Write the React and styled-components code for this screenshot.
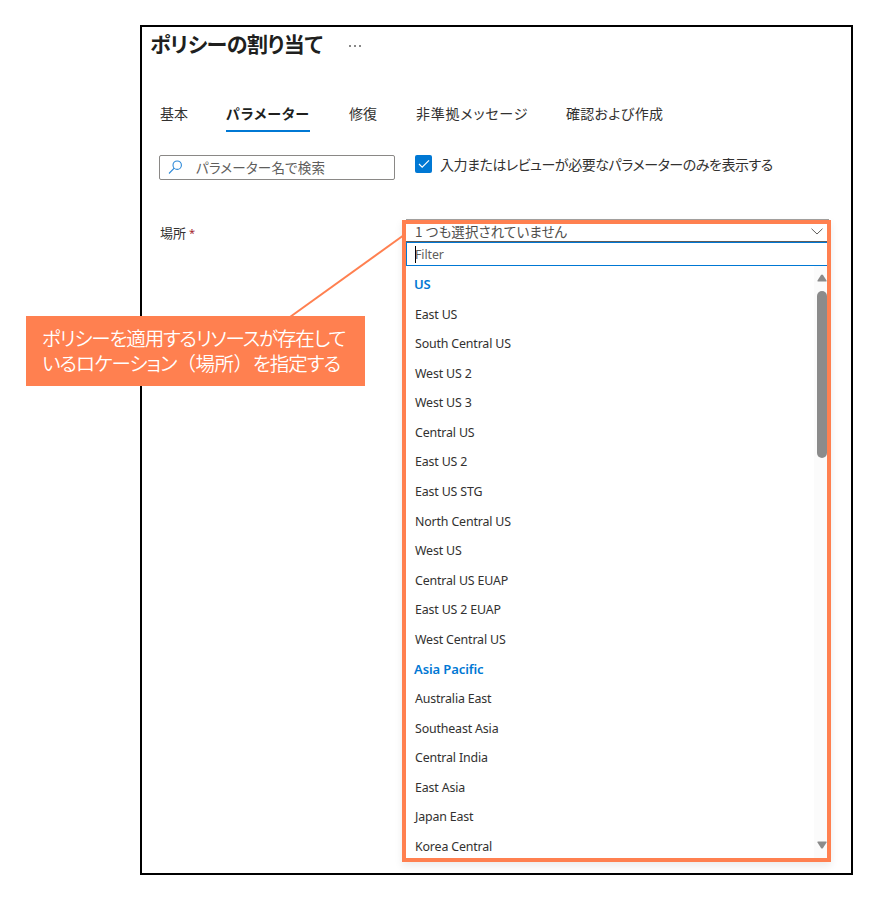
import React from "react";
import styled, { createGlobalStyle } from "styled-components";

const orange = "#ff8050";
const blue = "#0078d4";

const GlobalStyle = createGlobalStyle`
  * { box-sizing: border-box; }
  body {
    margin: 0;
    background: #fff;
    color: #323130;
    font-family: "Noto Sans", "Noto Sans CJK JP", sans-serif;
  }
`;

const Page = styled.div`
  position: relative;
  width: 875px;
  height: 901px;
  padding: 25px 22px 26px 140px;
  overflow: hidden;
`;

const Window = styled.main`
  width: 713px;
  height: 850px;
  border: 2px solid #000;
`;

const Jp = styled.span`
  display: block;
  margin: 0;
  white-space: nowrap;
  font-family: "Noto Sans CJK JP", sans-serif;
  font-feature-settings: "palt";
  font-size: ${(p) => p.$size || 14}px;
  font-weight: ${(p) => p.$weight || 400};
  letter-spacing: ${(p) => p.$spacing || 0}px;
  line-height: 20px;
`;

const Wide = styled.span`
  font-feature-settings: normal;
  letter-spacing: -0.5px;
`;

const Header = styled.header`
  display: flex;
  align-items: center;
  gap: 27px;
  height: 32px;
  margin-bottom: 4px;
  padding-left: 8px;
  color: #201f1e;
`;

const More = styled.span`
  display: flex;
  gap: 3px;
  padding-top: 5px;
  &::before, &::after, & > i {
    content: "";
    width: 2px;
    height: 2px;
    background: #888;
  }
`;

const Tabs = styled.nav`
  display: flex;
  height: 70px;
  padding: 39px 0 0 18px;
`;

const Tab = styled.div`
  width: ${(p) => p.$width}px;
  height: 30px;
  margin-right: ${(p) => p.$gap || 0}px;
  padding-top: 1px;
  border-bottom: 2px solid ${(p) => (p.$active ? blue : "transparent")};
  color: ${(p) => (p.$active ? "#201f1e" : "inherit")};
`;

const Tools = styled.div`
  display: flex;
  align-items: flex-start;
  height: 48px;
  margin-top: 22px;
  padding-left: 17px;
`;

const Search = styled.div`
  display: flex;
  align-items: center;
  width: 236px;
  height: 25px;
  padding: 0 0 1px 8px;
  gap: 13px;
  border: 1px solid #8a8886;
  border-radius: 2px;
  color: #605e5c;
`;

const CheckLabel = styled.div`
  display: flex;
  align-items: center;
  gap: 8px;
  height: 18px;
  margin-left: 20px;
`;

const CheckBox = styled.span`
  display: flex;
  align-items: center;
  justify-content: center;
  width: 17px;
  height: 18px;
  border-radius: 2px;
  background: ${blue};
`;

const Field = styled.div`
  display: grid;
  grid-template-columns: 242px 429px;
  padding: 16px 0 0 18px;
`;

const FieldLabel = styled.div`
  display: flex;
  gap: 3px;
  padding-top: 4px;
`;

const Required = styled.span`
  color: #a4262c;
  font-size: 11px;
  line-height: 20px;
`;

const Dropdown = styled.section`
  height: 643px;
  box-shadow: 0 4px 8px rgba(0, 0, 0, 0.08);
`;

const TopEdge = styled.div`
  height: 1px;
  margin: 0 2px 0 4px;
  background: #a19f9d;
`;

const Highlight = styled.div`
  height: 642px;
  border: 4px solid ${orange};
`;

const Selected = styled.div`
  display: flex;
  justify-content: space-between;
  align-items: center;
  height: 18px;
  padding: 0 4px 0 9px;
  border-bottom: 1px solid #605e5c;
  color: #504e4c;
  ${Jp} { margin-top: -4px; }
  svg { margin-top: -2px; }
`;

const Filter = styled.div`
  display: flex;
  align-items: center;
  height: 24px;
  padding: 1px 0 0 8px;
  border: 1px solid ${blue};
  border-right: 0;
  color: #605e5c;
  font-size: 12.4px;
  letter-spacing: -0.1px;
`;

const Caret = styled.span`
  width: 1px;
  height: 17px;
  margin-right: -1px;
  background: #000;
`;

const ListArea = styled.div`
  display: flex;
  justify-content: space-between;
  height: 592px;
`;

const List = styled.ul`
  flex: 1;
  margin: 0;
  padding: 4px 0 0 9px;
  list-style: none;
`;

const Option = styled.li`
  height: 29.59px;
  line-height: 30px;
  font-size: 12.4px;
  letter-spacing: -0.16px;
  white-space: nowrap;
`;

const Group = styled(Option)`
  margin-left: -1px;
  color: ${blue};
  font-weight: 600;
  font-size: 13px;
  letter-spacing: -0.1px;
  line-height: 28px;
`;

const Scrollbar = styled.div`
  display: flex;
  flex-direction: column;
  align-items: flex-end;
  width: 13px;
  padding: 8px 0 9px;
  background: #fbfbfb;
`;

const Thumb = styled.div`
  width: 10px;
  height: 167px;
  margin: 9px 0 auto;
  border-radius: 5px;
  background: #8b8b8b;
`;

const Callout = styled.aside`
  position: absolute;
  left: 26px;
  top: 316px;
  width: 339px;
  height: 70px;
  padding: 9px 0 0 16px;
  background: ${orange};
  color: #fff;
  ${Jp} { line-height: 25px; }
`;

const Connector = styled.svg`
  position: absolute;
  left: 285px;
  top: 228px;
`;

const Arrow = ({ down }) => (
  <svg width="10" height="8" viewBox="0 0 10 8">
    <path
      d={down ? "M1 .5h8q1 0 .5 1L6 7q-1 1-2 0L.5 1.5Q0 .5 1 .5Z" : "M1 7.5h8q1 0 .5-1L6 1Q5 0 4 1L.5 6.500q-.5 1 .5 1Z"}
      fill="#8b8b8b"
    />
  </svg>
);

const groups = [
  ["US", ["East US", "South Central US", "West US 2", "West US 3", "Central US", "East US 2", "East US STG", "North Central US", "West US", "Central US EUAP", "East US 2 EUAP", "West Central US"]],
  ["Asia Pacific", ["Australia East", "Southeast Asia", "Central India", "East Asia", "Japan East", "Korea Central"]],
];

export default function App() {
  return (
    <Page>
      <GlobalStyle />
      <Window>
        <Header>
          <Jp as="h1" $size={21} $weight={700} $spacing={-0.4}>ポリシーの割り当て</Jp>
          <More><i /></More>
        </Header>
        <Tabs>
          <Tab $width={28} $gap={38}><Jp>基本</Jp></Tab>
          <Tab $width={84} $gap={39} $active><Jp $weight={700} $spacing={0.9}>パラメーター</Jp></Tab>
          <Tab $width={28} $gap={39}><Jp>修復</Jp></Tab>
          <Tab $width={112} $gap={38}><Jp $spacing={0.8}>非準拠メッセージ</Jp></Tab>
          <Tab $width={97}><Jp $spacing={0.3}>確認および作成</Jp></Tab>
        </Tabs>
        <Tools>
          <Search>
            <svg width="15" height="15" viewBox="0 0 15 15" fill="none" stroke="#2b88d8" strokeWidth="1.1">
              <circle cx="9.2" cy="5.2" r="4.2" />
              <path d="M6.2 8.2 1 13.5" />
            </svg>
            <Jp $size={13.5} $spacing={0.2}>パラメーター名で検索</Jp>
          </Search>
          <CheckLabel>
            <CheckBox>
              <svg width="12" height="10" viewBox="0 0 12 10" fill="none" stroke="#fff" strokeWidth="1.2">
                <path d="m1 5 3.2 3.2L11 1.4" />
              </svg>
            </CheckBox>
            <Jp $spacing={-0.46}>入力またはレビューが必要なパラメーターのみを表示する</Jp>
          </CheckLabel>
        </Tools>
        <Field>
          <FieldLabel>
            <Jp $size={13}>場所</Jp>
            <Required>*</Required>
          </FieldLabel>
          <Dropdown>
            <TopEdge />
            <Highlight>
              <Selected>
                <Jp $size={13.5} $spacing={0.1}>1 つも選択されていません</Jp>
                <svg width="12" height="7" viewBox="0 0 12 7" fill="none" stroke="#605e5c">
                  <path d="M.5.7 6 6 11.5.7" />
                </svg>
              </Selected>
              <Filter><Caret />Filter</Filter>
              <ListArea>
                <List>
                  {groups.map(([name, items]) => (
                    <React.Fragment key={name}>
                      <Group>{name}</Group>
                      {items.map((item) => <Option key={item}>{item}</Option>)}
                    </React.Fragment>
                  ))}
                </List>
                <Scrollbar>
                  <Arrow />
                  <Thumb />
                  <Arrow down />
                </Scrollbar>
              </ListArea>
            </Highlight>
          </Dropdown>
        </Field>
      </Window>
      <Connector width="122" height="92" viewBox="0 0 122 92">
        <path d="M5 89 119 7" stroke={orange} strokeWidth="2" />
      </Connector>
      <Callout>
        <Jp $size={19.5} $weight={350} $spacing={-1.15}>ポリシーを適用するリソースが存在して</Jp>
        <Jp $size={19.5} $weight={350} $spacing={-0.9}>いるロケーション<Wide>（場所）</Wide>を指定する</Jp>
      </Callout>
    </Page>
  );
}
